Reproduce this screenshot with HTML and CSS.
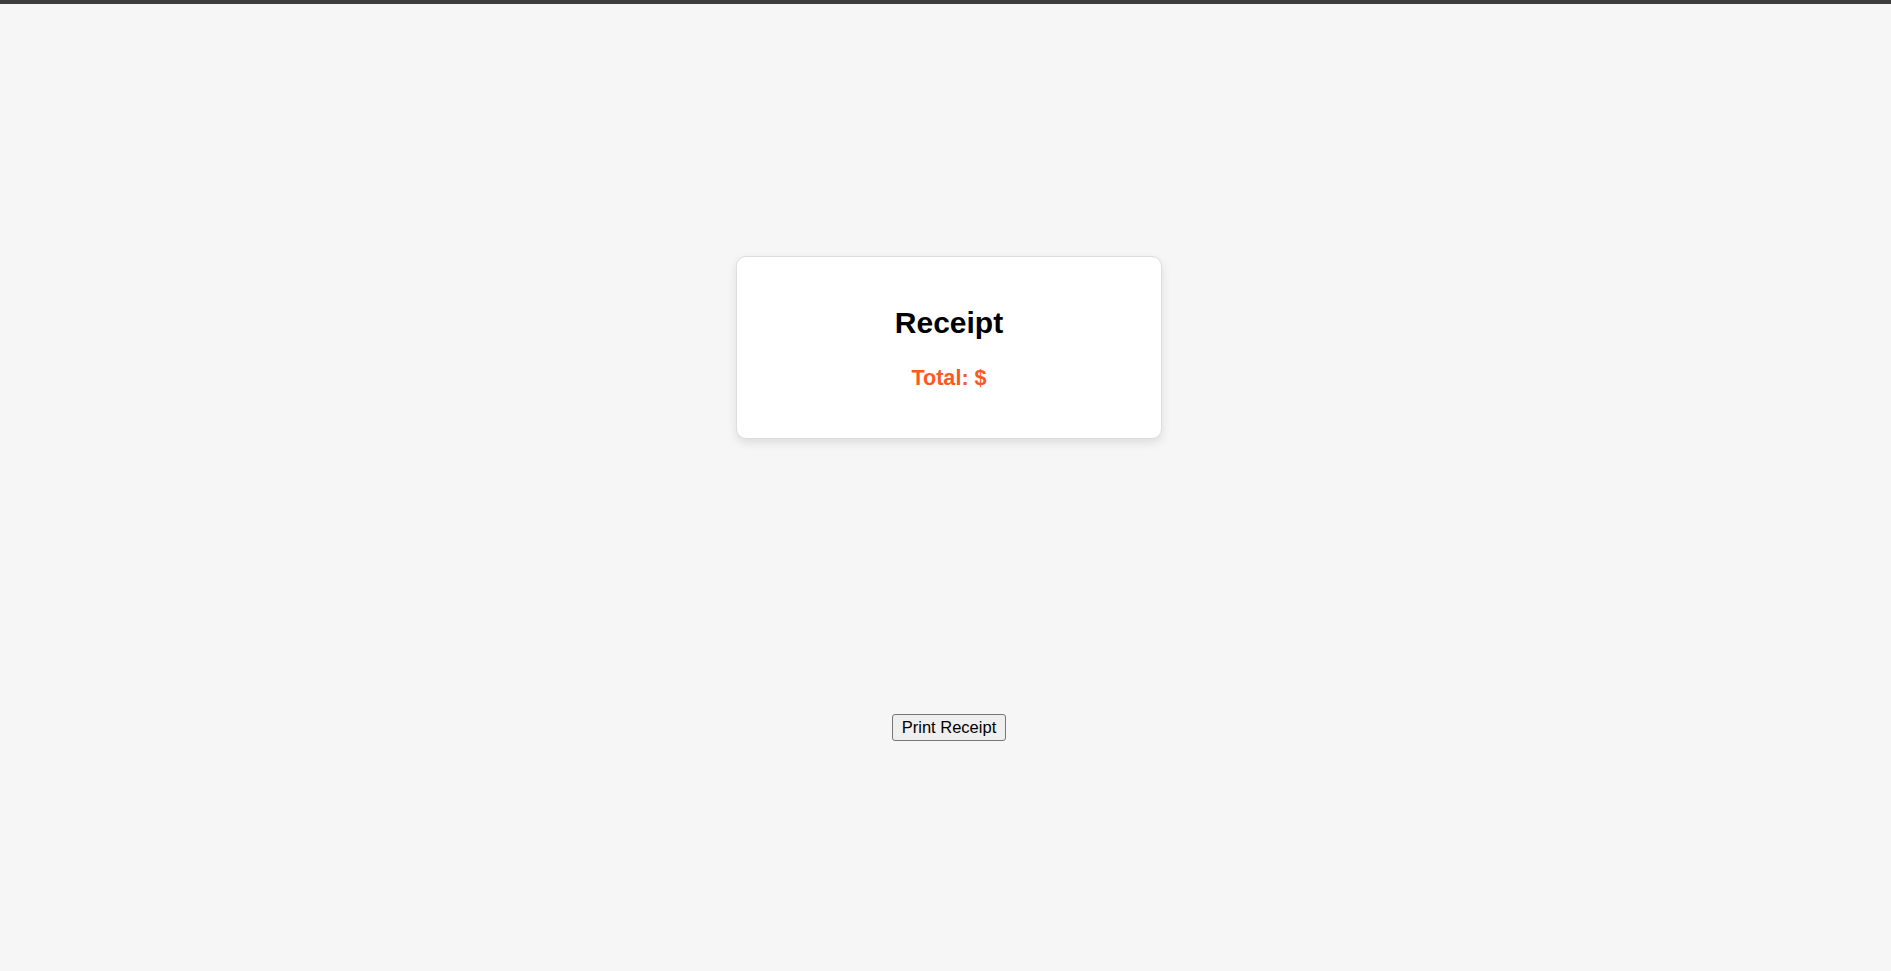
FILE: index.html
```html
<!DOCTYPE html>
<html lang="en">
<head>
<meta charset="utf-8">
<title>Receipt</title>
<link rel="stylesheet" href="styles.css">
</head>
<body>
<div class="page">
  <div class="receipt">
    <h2 class="receipt-title">Receipt</h2>
    <p class="receipt-total">Total: $</p>
  </div>
  <button class="print-btn" type="button">Print Receipt</button>
</div>
</body>
</html>
```

FILE: styles.css
```css
html, body {
  margin: 0;
  padding: 0;
}
html {
  background: #f6f6f6;
}
body {
  background: #f6f6f6;
  border-top: 4px solid #3d3d3d;
  font-family: "Liberation Sans", Arial, sans-serif;
}
.page {
  display: flex;
  flex-direction: column;
  align-items: center;
  padding-top: 252px;
  padding-left: 7px;
}
.receipt {
  box-sizing: border-box;
  width: 426px;
  background: #ffffff;
  border: 1px solid #dddddd;
  border-radius: 10px;
  box-shadow: 0 4px 10px rgba(0, 0, 0, 0.1);
  padding: 49px 20px 48px;
  text-align: center;
}
.receipt-title {
  margin: 0;
  font-size: 30px;
  font-weight: bold;
  color: #000;
  line-height: 34.5px;
}
.receipt-total {
  margin: 24.5px 0 0;
  font-size: 21.6px;
  font-weight: bold;
  color: #ff5722;
  line-height: 25px;
}
.print-btn {
  margin-top: 275px;
  font-family: "Liberation Sans", Arial, sans-serif;
  font-size: 16.5px;
  line-height: 19px;
  padding: 3px 9px;
  border: 1px solid #767676;
  border-radius: 3px;
  background: #efefef;
  color: #000;
}
```
